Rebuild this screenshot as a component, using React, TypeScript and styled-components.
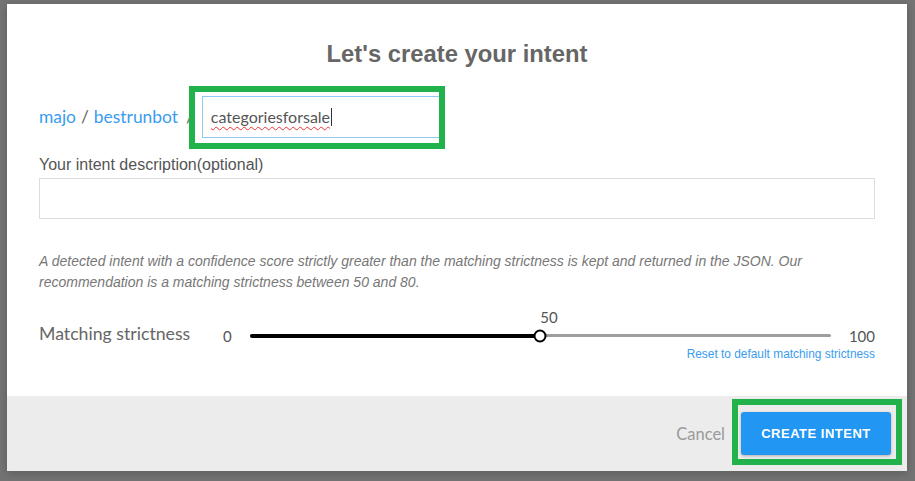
import React from "react";
import styled, { createGlobalStyle } from "styled-components";

const Global = createGlobalStyle`
  html, body { margin: 0; padding: 0; }
  body { background: #737373; width: 915px; height: 481px; overflow: hidden; font-family: "Liberation Sans", Arial, sans-serif; }
  #root { width: 915px; height: 481px; }
`;

const Page = styled.div`
  position: relative;
  width: 915px;
  height: 481px;
  background: #737373;
  overflow: hidden;
`;

const Backdrop = styled.div`
  position: absolute;
  inset: 0;
  padding: 4px 8px 10px 7px;
`;

const Modal = styled.div`
  position: relative;
  width: 900px;
  height: 467px;
  background: #fff;
  display: flex;
  flex-direction: column;
  box-shadow: 0 2px 8px rgba(0,0,0,0.2);
`;

const Body = styled.div`
  flex: 1;
  padding: 0 32px;
  display: flex;
  flex-direction: column;
`;

const Title = styled.h1`
  margin: 35px 0 0;
  font: 700 23.8px/30px "Liberation Sans", Arial, sans-serif;
  color: #666;
  text-align: center;
`;

const NameRow = styled.div`
  margin-top: 27px;
  height: 42px;
  display: flex;
  align-items: center;
`;

const Crumb = styled.span`
  font: 400 17.4px/22px Lato, "Open Sans", sans-serif;
  color: #3a9cf0;
`;

const Sep = styled.span<{ $l?: number; $r?: number }>`
  font: 400 17.4px/22px Lato, "Open Sans", sans-serif;
  color: #666;
  margin-left: ${(p) => p.$l ?? 5}px;
  margin-right: ${(p) => p.$r ?? 5}px;
`;

const NameInput = styled.div`
  box-sizing: border-box;
  width: 238px;
  height: 42px;
  border: 1px solid #90c8f6;
  padding: 0 8px;
  display: flex;
  align-items: center;
  font: 400 16px/20px Lato, "Open Sans", sans-serif;
  color: #555;
`;

const Misspelled = styled.span`
  text-decoration: underline wavy #e33;
  text-decoration-thickness: 1px;
  text-underline-offset: 3px;
`;

const Caret = styled.span`
  display: inline-block;
  width: 1px;
  height: 18px;
  background: #333;
  margin-left: 1px;
`;

const Label = styled.div`
  margin-top: 17px;
  font: 400 16px/20px "Liberation Sans", Arial, sans-serif;
  color: #555;
`;

const TextBox = styled.div`
  box-sizing: border-box;
  margin-top: 3px;
  height: 41px;
  border: 1px solid #ddd;
`;

const Hint = styled.p`
  margin: 32px 0 0;
  font: italic 400 14px/21px "Liberation Sans", Arial, sans-serif;
  color: #777;
`;

const SliderRow = styled.div`
  margin-top: 29px;
  height: 24px;
  display: flex;
  align-items: center;
`;

const SliderLabel = styled.div`
  flex: 0 0 184px;
  font: 400 17.7px/22px Lato, "Open Sans", sans-serif;
  color: #666;
`;

const Num = styled.span`
  font: 400 15px/20px Lato, "Open Sans", sans-serif;
  color: #555;
  margin-top: 3px;
`;

const Track = styled.div`
  position: relative;
  flex: 1;
  height: 3px;
  margin: 3px 18px 0;
  background: #9e9e9e;
  border-radius: 2px;
`;

const Fill = styled.div`
  position: absolute;
  left: 0;
  top: -0.5px;
  height: 4px;
  background: #000;
  border-radius: 2px;
`;

const Thumb = styled.div`
  position: absolute;
  top: 50%;
  width: 13px;
  height: 13px;
  box-sizing: border-box;
  border: 2px solid #000;
  border-radius: 50%;
  background: #fff;
  transform: translate(-50%, -50%);
`;

const ThumbValue = styled.span`
  position: absolute;
  bottom: 10px;
  font: 400 15px/20px Lato, "Open Sans", sans-serif;
  color: #555;
`;

const ResetLink = styled.a`
  align-self: flex-end;
  font: 400 11.9px/16px "Liberation Sans", Arial, sans-serif;
  color: #3a9cf0;
  text-decoration: none;
`;

const Footer = styled.div`
  height: 75px;
  background: #ececec;
  display: flex;
  justify-content: flex-end;
  align-items: center;
  padding-right: 16px;
  gap: 16px;
`;

const Cancel = styled.span`
  font: 400 16.5px/20px Lato, "Open Sans", sans-serif;
  color: #9a9a9a;
`;

const Primary = styled.button`
  width: 150px;
  height: 43px;
  border: none;
  border-radius: 3px;
  background: #2196f3;
  color: #fff;
  font: 700 13px/16px "Liberation Sans", Arial, sans-serif;
  letter-spacing: 0.5px;
  box-shadow: 0 1px 3px rgba(0,0,0,0.25);
`;

const Highlight = styled.div<{ $l: number; $t: number; $w: number; $h: number }>`
  position: absolute;
  left: ${(p) => p.$l}px;
  top: ${(p) => p.$t}px;
  width: ${(p) => p.$w}px;
  height: ${(p) => p.$h}px;
  box-sizing: border-box;
  border: 6px solid #22b24c;
  pointer-events: none;
`;

export default function App() {
  const value = 50;
  return (
    <Page>
      <Global />
      <Backdrop>
        <Modal>
          <Body>
            <Title>Let's create your intent</Title>
            <NameRow>
              <Crumb>majo</Crumb>
              <Sep>/</Sep>
              <Crumb>bestrunbot</Crumb>
              <Sep $l={8} $r={8}>/</Sep>
              <NameInput>
                <Misspelled>categoriesforsale</Misspelled>
                <Caret />
              </NameInput>
            </NameRow>
            <Label>Your intent description(optional)</Label>
            <TextBox />
            <Hint>
              A detected intent with a confidence score strictly greater than the matching strictness is kept and returned in the JSON. Our recommendation is a matching strictness between 50 and 80.
            </Hint>
            <SliderRow>
              <SliderLabel>Matching strictness</SliderLabel>
              <Num>0</Num>
              <Track>
                <Fill style={{ width: `${value}%` }} />
                <Thumb style={{ left: `${value}%` }} />
                <ThumbValue style={{ left: `${value}%` }}>50</ThumbValue>
              </Track>
              <Num>100</Num>
            </SliderRow>
            <ResetLink>Reset to default matching strictness</ResetLink>
          </Body>
          <Footer>
            <Cancel>Cancel</Cancel>
            <Primary>CREATE INTENT</Primary>
          </Footer>
          <Highlight $l={182} $t={82} $w={256} $h={63} />
          <Highlight $l={725} $t={395} $w={170} $h={66} />
        </Modal>
      </Backdrop>
    </Page>
  );
}
